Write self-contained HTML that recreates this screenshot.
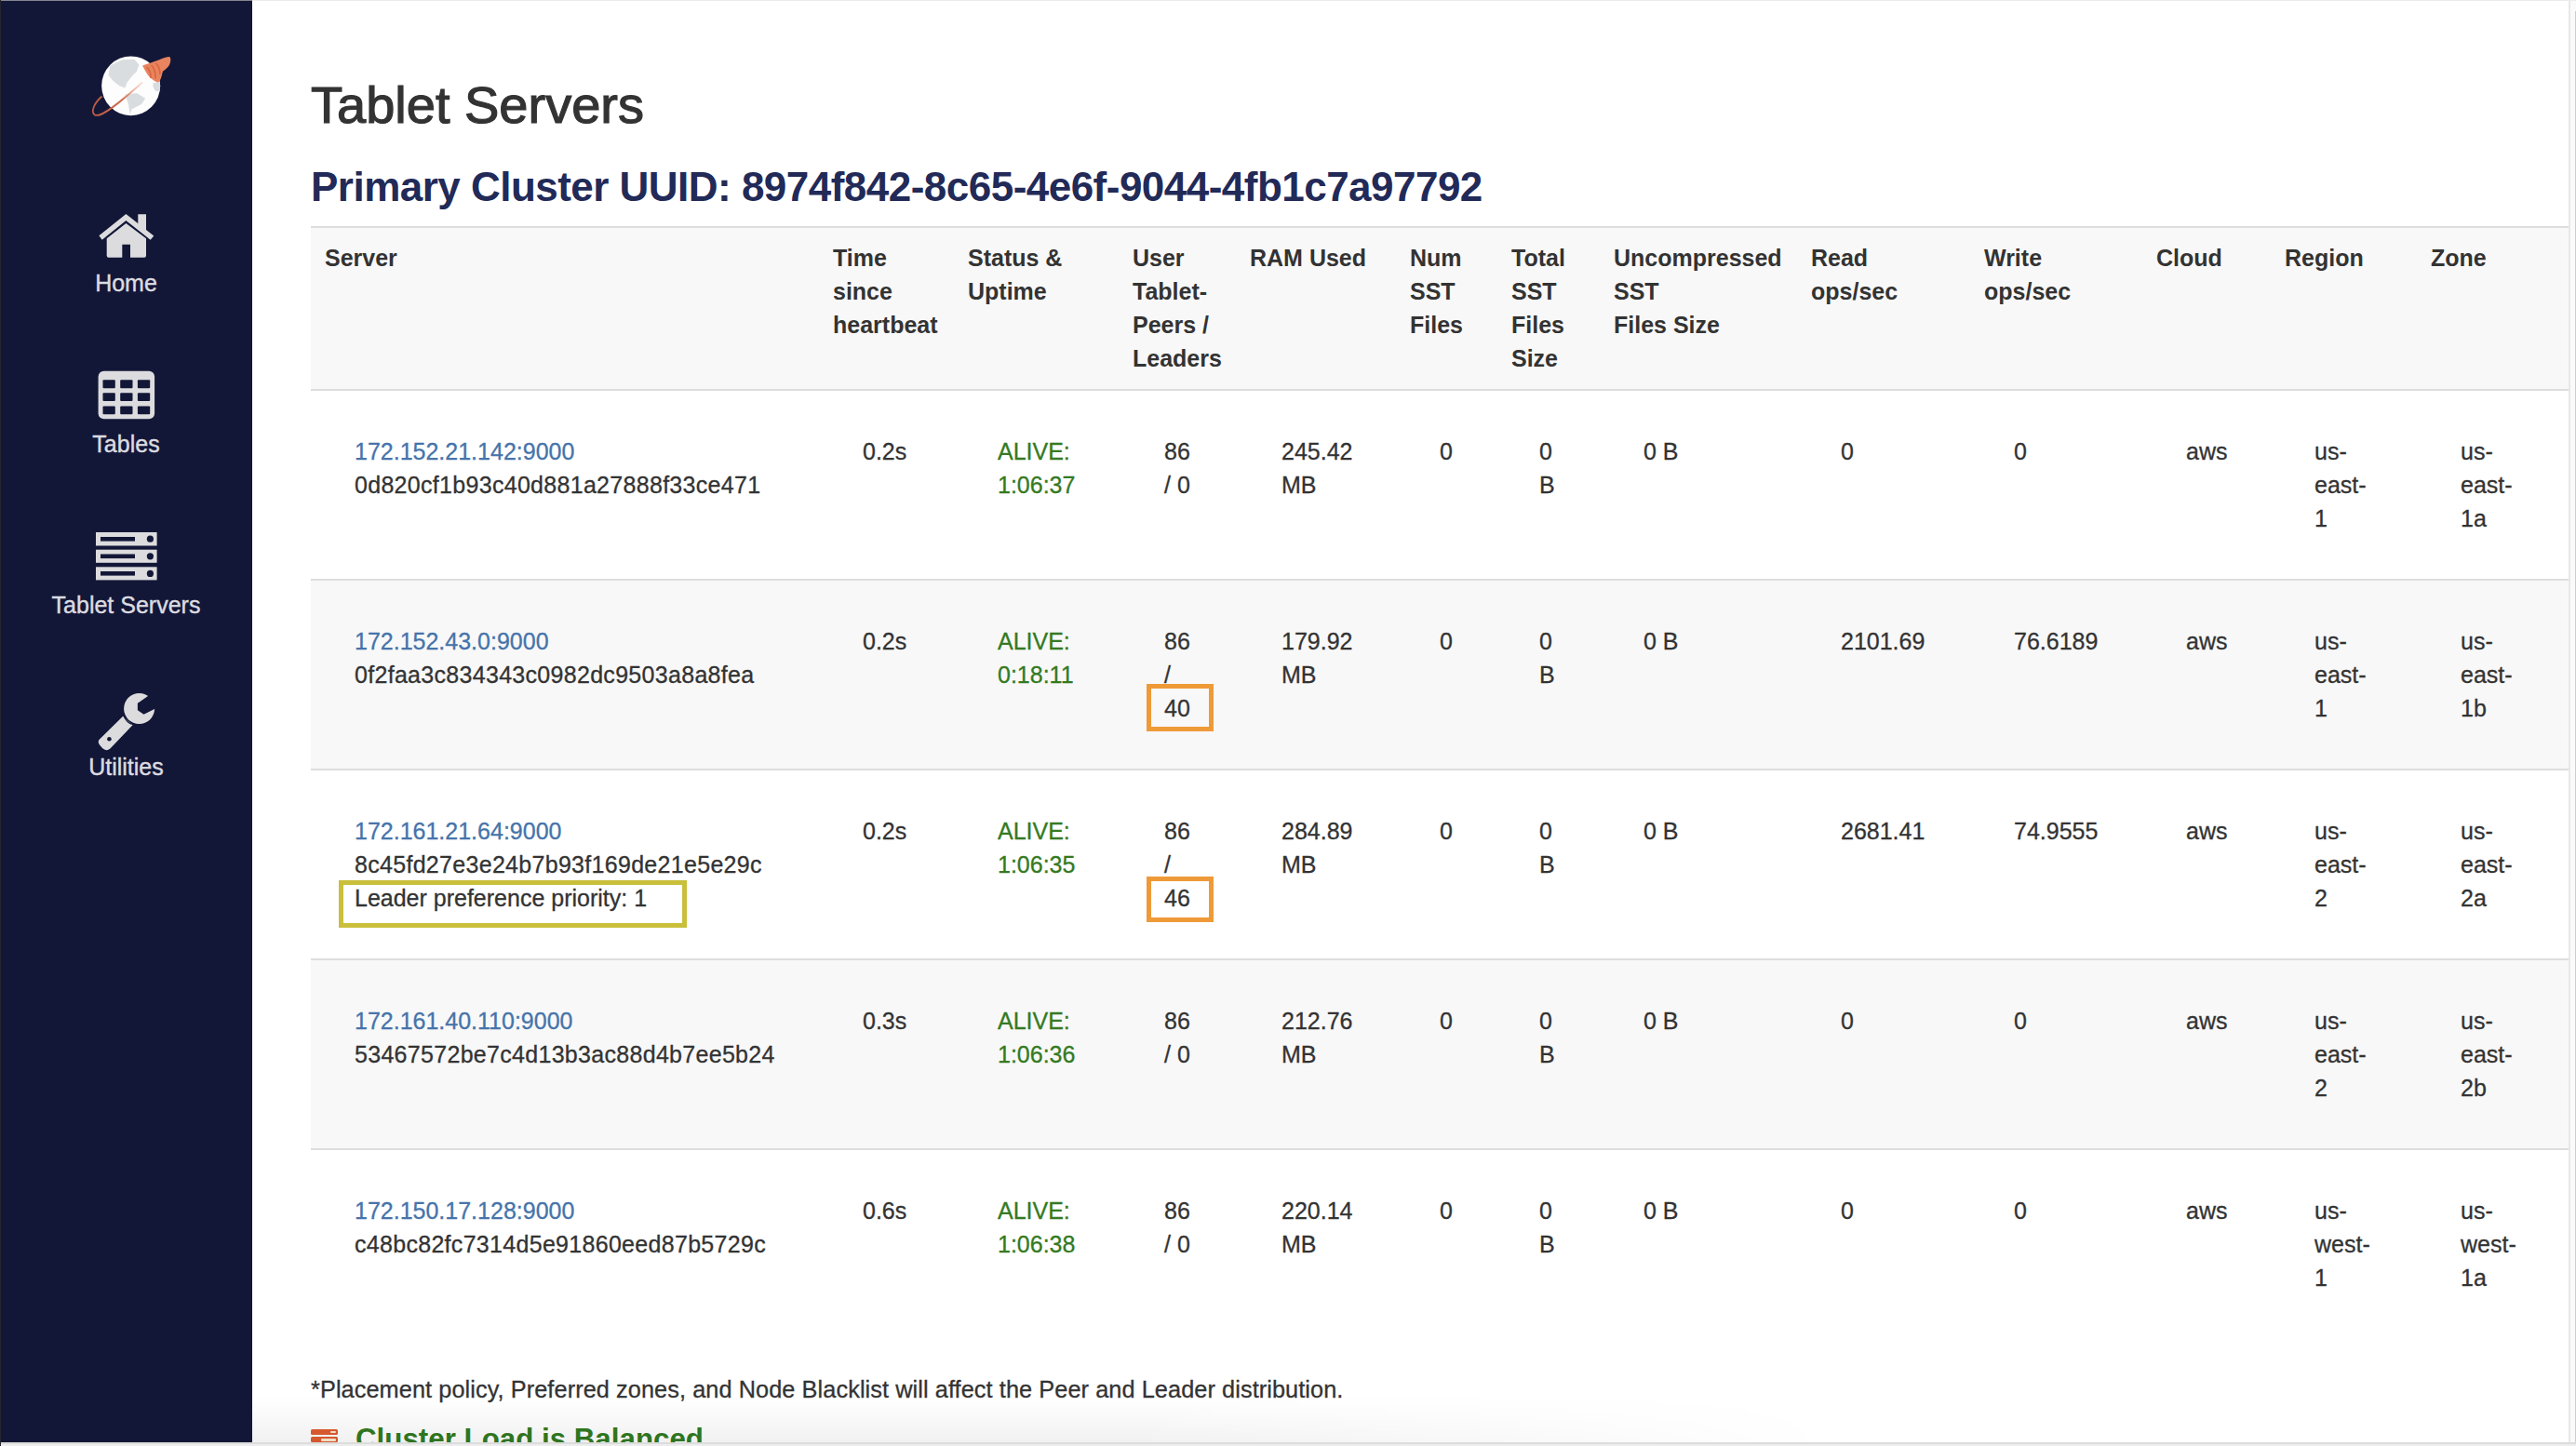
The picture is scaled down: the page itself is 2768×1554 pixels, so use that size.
<!DOCTYPE html>
<html>
<head>
<meta charset="utf-8">
<style>
*{box-sizing:border-box;}
html,body{margin:0;padding:0;}
body{width:2768px;height:1554px;overflow:hidden;position:relative;background:#fff;font-family:"Liberation Sans",sans-serif;color:#333;}
#side{position:absolute;left:0;top:0;width:271px;height:1554px;background:#131737;}
.nav{-webkit-text-stroke:0.4px #dcdce0;position:absolute;left:0;width:271px;text-align:center;color:#dcdce0;font-size:25px;line-height:30px;}
.ico{position:absolute;}
#main{position:absolute;left:271px;top:0;right:0;bottom:0;}
h1{position:absolute;margin:0;font-weight:normal;font-size:56px;line-height:64px;color:#333;white-space:nowrap;-webkit-text-stroke:1.2px #333;}
h2{position:absolute;margin:0;font-weight:bold;font-size:44px;letter-spacing:-0.52px;line-height:50px;color:#222a58;white-space:nowrap;}
table{position:absolute;left:334px;top:243px;width:2426px;border-collapse:collapse;table-layout:fixed;font-size:25px;line-height:36px;}
th{text-align:left;vertical-align:top;font-weight:bold;background:#f8f8f8;padding:14px 15px 15px 15px;white-space:nowrap;}
th:nth-child(4),th:nth-child(5){padding-left:13px;}
th:nth-child(7){padding-left:17px;}
thead tr{border-top:2px solid #ddd;border-bottom:2px solid #ddd;}
td{-webkit-text-stroke:0.3px;vertical-align:top;padding:47px 10px 47px 47px;white-space:nowrap;height:202px;}
tbody tr{border-bottom:2px solid #ddd;}
tbody tr:last-child{border-bottom:none;}
tbody tr:nth-child(even) td{background:#f8f8f8;}
a{color:#4674aa;text-decoration:none;}
.g{color:#337a22;}
.uu{letter-spacing:0.3px;}
.box{position:absolute;border:5px solid #ef9a38;}
.yb{border-color:#c9bf3b;}
#foot{position:absolute;left:334px;top:1475px;font-size:25.3px;letter-spacing:0.08px;-webkit-text-stroke:0.3px;line-height:36px;white-space:nowrap;}
#bal{position:absolute;left:334px;top:1526px;white-space:nowrap;height:40px;}
#bal b{position:absolute;left:48px;top:2.6px;font-size:31.3px;line-height:36px;color:#317b22;}
.bico{position:absolute;left:0;top:10px;width:29px;}
.bico i{position:absolute;left:0;width:29px;height:6.2px;background:#e05e30;border-radius:1.5px;}
.bico s{position:absolute;top:2px;height:2.4px;background:#fde9d2;border-radius:1px;}
#shade{position:absolute;left:271px;width:1700px;top:1500px;height:50px;background:linear-gradient(rgba(0,0,0,0),rgba(0,0,0,0.02) 40%,rgba(0,0,0,0.055));-webkit-mask-image:linear-gradient(to right,#000 0%,#000 55%,transparent 100%);}
#rstrip{position:absolute;left:2760px;top:1px;width:8px;height:1549px;background:#fafafa;border-left:2px solid #e8e8e8;}
#rthumb{position:absolute;left:2767px;top:12px;width:1px;height:1538px;background:#cdcdcd;}
#lstrip{position:absolute;left:0;top:0;width:1px;height:1554px;background:#25252d;z-index:6;}
#scr{position:absolute;left:0;right:0;top:1550px;height:4px;background:#ededed;border-top:2px solid #dcdcdc;}
#topl{position:absolute;left:0;top:0;width:271px;height:1px;background:#85858f;z-index:5;}
#topr{position:absolute;left:271px;right:0;top:0;height:1px;background:#ececec;z-index:5;}
</style>
</head>
<body>
<div id="side"></div>
<svg id="sideico" width="271" height="900" viewBox="0 0 271 900" style="position:absolute;left:0;top:0">
<defs>
<clipPath id="gclip"><ellipse cx="140.65" cy="92.3" rx="31.5" ry="31.9"/></clipPath>
<mask id="wmask" maskUnits="userSpaceOnUse" x="0" y="700" width="271" height="150">
<rect x="0" y="700" width="271" height="150" fill="#fff"/>
<polygon points="158.7,748.2 147.9,755.8 147.9,763.2 154.5,767.7 166,762 172,740" fill="#000"/>
<circle cx="117.4" cy="794.3" r="2.3" fill="#000"/>
</mask>
</defs>
<!-- logo -->
<ellipse cx="140.65" cy="92.3" rx="31.5" ry="31.9" fill="#fdfdfd"/>
<g clip-path="url(#gclip)" fill="#d9dde0">
<path d="M118.3,70.6 L131.3,64.3 L144.3,63.8 L149.5,69.5 L146.9,76.8 L141.7,82 L136.5,88.7 L134.4,94.4 L128.2,92.3 L122,87.2 L116.5,80.9 Z"/>
<path d="M134.4,101.7 L146.9,100.1 L156.2,105.8 L152,112 L141.7,117.2 L139.6,123 L138,112 L135.9,105.8 Z"/>
<path d="M164.5,89.2 L173,88 L173,98 L167.1,98 L164.5,93.4 Z"/>
</g>
<defs><linearGradient id="rg" x1="99" y1="0" x2="153" y2="0" gradientUnits="userSpaceOnUse"><stop offset="0" stop-color="#b85a44"/><stop offset="0.6" stop-color="#d26a4c"/><stop offset="1" stop-color="#f0a080" stop-opacity="0.3"/></linearGradient></defs>
<path d="M109.5,103.5 C101,111 97.5,120 101.5,123.3 C106,126.5 118,120 153,88.5" fill="none" stroke="url(#rg)" stroke-width="1.8"/>
<path d="M153.1,70.6 C158,68.5 166,66.5 171,64.3 C175,62.6 179,61 182.2,61 C184,62.5 183.5,67 181.6,70.6 C180,73 177,75.5 174.9,76.8 C174,80 173.5,83.5 172.3,85.6 C171.5,87.3 170.5,88.5 169.7,88.7 C167,88 163,85 160,82 C157.5,79 155,74.5 153.1,70.6 Z" fill="#e8845f"/>
<path d="M157.5,72 Q162.5,76.5 162,84 M162.5,69.8 Q167.5,74.5 167,84.5 M167.3,67.8 Q172,72 172,80" fill="none" stroke="#dc6840" stroke-width="1.8"/>
<!-- home -->
<g fill="#dcdcde">
<polygon points="106.4,253.2 135.4,230 165.3,253.6 161.6,257.7 135.4,237 109.7,257.7"/>
<polygon points="148.3,230.2 157,230.2 157,249 148.3,242"/>
<path d="M114.7,256.3 L135.4,240 L157,256.3 L157,274.8 Q157,276.8 155,276.8 L140,276.8 L140,262.7 L131.3,262.7 L131.3,276.8 L116.7,276.8 Q114.7,276.8 114.7,274.8 Z"/>
</g>
<!-- tables -->
<g>
<rect x="105.6" y="398.7" width="60.5" height="51.5" rx="6" fill="#dcdcde"/>
<g fill="#131737">
<rect x="110.5" y="408.2" width="13.3" height="9.1" rx="1"/><rect x="129.2" y="408.2" width="13.3" height="9.1" rx="1"/><rect x="147.9" y="408.2" width="13.3" height="9.1" rx="1"/>
<rect x="110.5" y="422.3" width="13.3" height="8.8" rx="1"/><rect x="129.2" y="422.3" width="13.3" height="8.8" rx="1"/><rect x="147.9" y="422.3" width="13.3" height="8.8" rx="1"/>
<rect x="110.5" y="436.4" width="13.3" height="8.8" rx="1"/><rect x="129.2" y="436.4" width="13.3" height="8.8" rx="1"/><rect x="147.9" y="436.4" width="13.3" height="8.8" rx="1"/>
</g>
</g>
<!-- tablet servers -->
<g>
<rect x="103" y="572" width="65.6" height="14.5" fill="#dcdcde"/>
<rect x="103" y="590.7" width="65.6" height="14.1" fill="#dcdcde"/>
<rect x="103" y="609.3" width="65.6" height="14.1" fill="#dcdcde"/>
<g fill="#131737">
<rect x="108" y="577" width="37" height="4.6"/><rect x="108" y="595.5" width="37" height="4.6"/><rect x="108" y="614" width="37" height="4.6"/>
<circle cx="161.4" cy="579.2" r="3.6"/><circle cx="161.4" cy="597.8" r="3.6"/><circle cx="161.4" cy="616.4" r="3.6"/>
</g>
</g>
<!-- utilities -->
<g mask="url(#wmask)" fill="#dcdcde">
<circle cx="149.6" cy="761.5" r="16.5"/>
<path d="M132.1,769.8 L142.5,779.3 L118.4,804.6 Q114,808 110,804 L107,800.5 Q104,796.5 108,793.5 Z"/>
</g>
<path d="M133.5,770.5 A16.5,16.5 0 0 0 141.5,778.5" fill="none" stroke="#131737" stroke-width="1.2"/>
</svg>
<div class="nav" style="top:289px">Home</div>
<div class="nav" style="top:462px">Tables</div>
<div class="nav" style="top:635px">Tablet Servers</div>
<div class="nav" style="top:809px">Utilities</div>

<div id="topl"></div><div id="topr"></div>
<h1 style="left:334px;top:81px">Tablet Servers</h1>
<h2 style="left:334px;top:176px">Primary Cluster UUID: 8974f842-8c65-4e6f-9044-4fb1c7a97792</h2>
<table><colgroup><col style="width:546px"><col style="width:145px"><col style="width:179px"><col style="width:126px"><col style="width:170px"><col style="width:107px"><col style="width:112px"><col style="width:212px"><col style="width:186px"><col style="width:185px"><col style="width:138px"><col style="width:157px"><col style="width:163px"></colgroup><thead><tr><th>Server</th><th>Time<br>since<br>heartbeat</th><th>Status &amp;<br>Uptime</th><th>User<br>Tablet-<br>Peers /<br>Leaders</th><th>RAM Used</th><th>Num<br>SST<br>Files</th><th>Total<br>SST<br>Files<br>Size</th><th>Uncompressed<br>SST<br>Files Size</th><th>Read<br>ops/sec</th><th>Write<br>ops/sec</th><th>Cloud</th><th>Region</th><th>Zone</th></tr></thead><tbody><tr><td><a>172.152.21.142:9000</a><br><span class="uu">0d820cf1b93c40d881a27888f33ce471</span></td><td>0.2s</td><td class="g">ALIVE:<br>1:06:37</td><td>86<br>/ 0</td><td>245.42<br>MB</td><td>0</td><td>0<br>B</td><td>0 B</td><td>0</td><td>0</td><td>aws</td><td>us-<br>east-<br>1</td><td>us-<br>east-<br>1a</td></tr><tr><td><a>172.152.43.0:9000</a><br><span class="uu">0f2faa3c834343c0982dc9503a8a8fea</span></td><td>0.2s</td><td class="g">ALIVE:<br>0:18:11</td><td>86<br>/<br>40</td><td>179.92<br>MB</td><td>0</td><td>0<br>B</td><td>0 B</td><td>2101.69</td><td>76.6189</td><td>aws</td><td>us-<br>east-<br>1</td><td>us-<br>east-<br>1b</td></tr><tr><td><a>172.161.21.64:9000</a><br><span class="uu">8c45fd27e3e24b7b93f169de21e5e29c</span><br>Leader preference priority: 1</td><td>0.2s</td><td class="g">ALIVE:<br>1:06:35</td><td>86<br>/<br>46</td><td>284.89<br>MB</td><td>0</td><td>0<br>B</td><td>0 B</td><td>2681.41</td><td>74.9555</td><td>aws</td><td>us-<br>east-<br>2</td><td>us-<br>east-<br>2a</td></tr><tr><td><a>172.161.40.110:9000</a><br><span class="uu">53467572be7c4d13b3ac88d4b7ee5b24</span></td><td>0.3s</td><td class="g">ALIVE:<br>1:06:36</td><td>86<br>/ 0</td><td>212.76<br>MB</td><td>0</td><td>0<br>B</td><td>0 B</td><td>0</td><td>0</td><td>aws</td><td>us-<br>east-<br>2</td><td>us-<br>east-<br>2b</td></tr><tr><td><a>172.150.17.128:9000</a><br><span class="uu">c48bc82fc7314d5e91860eed87b5729c</span></td><td>0.6s</td><td class="g">ALIVE:<br>1:06:38</td><td>86<br>/ 0</td><td>220.14<br>MB</td><td>0</td><td>0<br>B</td><td>0 B</td><td>0</td><td>0</td><td>aws</td><td>us-<br>west-<br>1</td><td>us-<br>west-<br>1a</td></tr></tbody></table>
<div class="box ob" style="left:1232px;top:735px;width:72px;height:51px"></div>
<div class="box ob" style="left:1232px;top:942px;width:72px;height:49px"></div>
<div class="box yb" style="left:364px;top:946px;width:374px;height:51px"></div>
<div id="foot">*Placement policy, Preferred zones, and Node Blacklist will affect the Peer and Leader distribution.</div>
<div id="bal"><span class="bico"><i style="top:0"><s style="left:21px;width:6px"></s></i><i style="top:8.3px"><s style="left:10.5px;width:16.5px"></s></i></span><b>Cluster Load is Balanced</b></div>
<div id="shade"></div>
<div id="scr"></div>
<div id="rstrip"></div><div id="rthumb"></div><div id="lstrip"></div>

</body>
</html>
